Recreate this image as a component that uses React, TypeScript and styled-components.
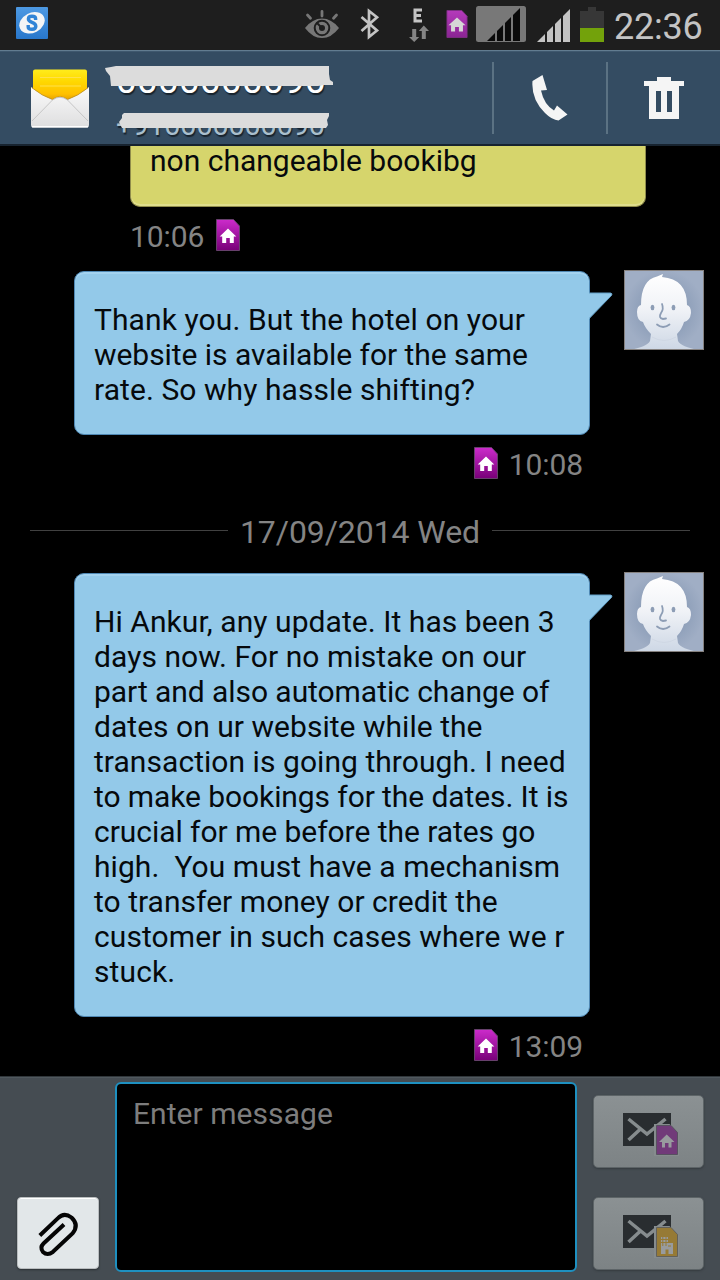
import React from "react";
import styled, { createGlobalStyle } from "styled-components";

const GlobalStyle = createGlobalStyle`
  * { box-sizing: border-box; }
  body { margin: 0; background: #000; font-family: Roboto, "Liberation Sans", sans-serif; }
  svg { display: block; flex: none; }
`;

const Screen = styled.div`
  width: 720px;
  height: 1280px;
  display: flex;
  flex-direction: column;
  overflow: hidden;
  background: #000;
`;

const StatusBar = styled.div`
  height: 50px;
  flex: none;
  display: flex;
  align-items: flex-start;
  padding: 0 16px;
  background: #1e1e1e;
`;

const StatusItem = styled.div<{ $top: number; $left?: number }>`
  margin-top: ${(p) => p.$top}px;
  margin-left: ${(p) => p.$left ?? 0}px;
`;

const Spacer = styled.div`
  flex: 1;
`;

const Clock = styled.div`
  width: 90px;
  margin: 6px 0 0 10px;
  font-size: 36px;
  line-height: 42px;
  letter-spacing: -0.2px;
  color: #c4c4c4;
  white-space: nowrap;
`;

const Header = styled.header`
  height: 96px;
  flex: none;
  display: flex;
  background: #344c62;
  border-top: 1px solid #627c90;
  border-bottom: 2px solid #17232f;
  box-shadow: inset 0 1px 0 #3f586e;
`;

const ContactIcon = styled.div`
  margin: 17px 0 0 30px;
`;

const Contact = styled.div`
  flex: 1;
  display: flex;
  flex-direction: column;
  margin-left: 15px;
`;

const Redacted = styled.div<{ $height: number; $size: number; $color: string; $pad: number; $top: number; $spacing: number }>`
  position: relative;
  height: ${(p) => p.$height}px;
  padding: ${(p) => p.$top}px 0 0 ${(p) => p.$pad}px;
  font-size: ${(p) => p.$size}px;
  line-height: ${(p) => p.$size}px;
  letter-spacing: ${(p) => p.$spacing}px;
  color: ${(p) => p.$color};
  white-space: nowrap;
  text-shadow: 1px 2px 1px rgba(0, 0, 0, 0.55);
`;

const Scribble = styled.svg`
  position: absolute;
  left: 0;
  top: 0;
`;

const HeaderAction = styled.button`
  width: 114px;
  padding: 0 0 0 2px;
  border: 0;
  background: none;
  display: flex;
  justify-content: center;
  position: relative;
  &::before {
    content: "";
    position: absolute;
    left: 0;
    top: 11px;
    width: 2px;
    height: 72px;
    background: #5b7283;
  }
`;

const Conversation = styled.main`
  flex: 1;
  min-height: 0;
  overflow: hidden;
  display: flex;
  flex-direction: column;
`;

const MessageRow = styled.div`
  display: flex;
  flex: none;
  align-items: flex-start;
  justify-content: space-between;
  padding: 0 16px 0 74px;
`;

const Bubble = styled.div<{ $kind: "received" | "sent" }>`
  position: relative;
  width: 516px;
  margin-top: 1px;
  padding: 30px 0 27px 19px;
  border: 1px solid #4f88b4;
  border-radius: 10px;
  background: #93c9e9;
  box-shadow: inset 0 2px 0 #a3d2ef;
  font-size: 30px;
  line-height: 35px;
  color: #06090c;
  white-space: pre;
  ${(p) =>
    p.$kind === "received" &&
    `
    flex: none;
    height: 61px;
    margin: 0 0 0 130px;
    padding: 0 0 0 19px;
    border-color: #908d4c;
    border-top: 0;
    border-radius: 0 0 10px 10px;
    background: #d6d56c;
    box-shadow: inset 0 -2px 0 #dfde8c;
    line-height: 29px;
  `}
`;

const Line = styled.div<{ $spacing?: number }>`
  letter-spacing: ${(p) => p.$spacing ?? 0}px;
`;

const Tail = styled.svg`
  position: absolute;
  left: 513px;
  top: 19px;
`;

const Meta = styled.div<{ $align: "left" | "right" }>`
  display: flex;
  flex: none;
  height: 35px;
  margin-top: 12px;
  gap: ${(p) => (p.$align === "left" ? 12 : 11)}px;
  font-size: 30px;
  line-height: 35px;
  color: #848484;
  letter-spacing: -0.1px;
  padding: ${(p) => (p.$align === "left" ? "0 0 0 130px" : "0 137px 0 0")};
  justify-content: ${(p) => (p.$align === "left" ? "flex-start" : "flex-end")};
`;

const Gap = styled.div<{ $size: number }>`
  height: ${(p) => p.$size}px;
  flex: none;
`;

const DateDivider = styled.div`
  display: flex;
  flex: none;
  height: 36px;
  padding: 0 30px;
  gap: 12px;
  font-size: 32px;
  line-height: 36px;
  letter-spacing: -0.07px;
  color: #848484;
  white-space: nowrap;
`;

const Rule = styled.div`
  flex: 1;
  height: 1px;
  margin-top: 16px;
  background: #414141;
`;

const Composer = styled.footer`
  height: 204px;
  flex: none;
  display: flex;
  align-items: flex-start;
  padding: 5px 0 0 17px;
  border-top: 1px solid #30363a;
  background: #454c52;
  box-shadow: inset 0 1px 0 #50585e;
`;

const AttachButton = styled.button`
  width: 82px;
  height: 72px;
  flex: none;
  margin-top: 115px;
  padding: 0;
  border: 1px solid #b9bdbf;
  border-radius: 4px;
  background: #e2e7e9;
  box-shadow: inset 0 1px 0 #fff, 0 1px 2px #2a3034;
  display: flex;
`;

const MessageInput = styled.div`
  width: 462px;
  height: 190px;
  flex: none;
  margin-left: 16px;
  padding: 12px 16px;
  border: 2px solid #1e90c0;
  border-radius: 6px;
  background: #000;
  color: #7d7d7d;
  font-size: 30px;
  line-height: 35px;
  letter-spacing: 0.05px;
`;

const SendColumn = styled.div`
  display: flex;
  flex-direction: column;
  gap: 29px;
  margin: 13px 0 0 16px;
`;

const SendButton = styled.button`
  width: 111px;
  height: 73px;
  padding: 0;
  border: 1px solid #5d6467;
  border-radius: 5px;
  background: linear-gradient(#8b9193, #7d8385);
  box-shadow: 0 1px 2px #353b3f;
  display: flex;
`;

const SimCard = ({ w = 24, h = 32, dim = false }: { w?: number; h?: number; dim?: boolean }) => (
  <svg width={w} height={h} viewBox="0 0 24 32">
    <defs>
      <linearGradient id={dim ? "simDim" : "sim"} x1="0" y1="0" x2="0" y2="1">
        <stop offset="0" stopColor={dim ? "#b53abb" : "#cc2bcb"} />
        <stop offset="1" stopColor={dim ? "#8a2493" : "#780078"} />
      </linearGradient>
    </defs>
    <path d="M.5 .5H17.5L23.5 7V31.5H.5Z" fill={`url(#${dim ? "simDim" : "sim"})`} stroke={dim ? "#803087" : "#66406b"} />
    {dim ? (
      <path d="M12 8.500L2.300 17.500H5.200V24.500H9.800V19.500H14.200V24.500H18.800V17.500H21.700Z" fill="#d6d6d6" />
    ) : (
      <path d="M12 9.500L3.700 17.500H6.200V24H10.200V19H13.800V24H17.800V17.500H20.300Z" fill="#fff" />
    )}
  </svg>
);

const SIcon = () => (
  <svg width="32" height="32" viewBox="0 0 32 32">
    <defs>
      <linearGradient id="sApp" x1="0" y1="0" x2="0" y2="1">
        <stop offset="0" stopColor="#4d99e3" />
        <stop offset="1" stopColor="#2877cb" />
      </linearGradient>
    </defs>
    <rect width="32" height="32" rx="1" fill="url(#sApp)" />
    <ellipse cx="16" cy="15.8" rx="13.3" ry="10" transform="rotate(-27 16 15.8)" fill="#f4f5f6" />
    <path d="M19.600 13V11.500Q19.600 9.300 16 9.300Q12.400 9.300 12.400 12Q12.400 14 16 15.300Q19.800 16.800 19.800 19.200Q19.800 22.200 16 22.200Q12.200 22.200 12.200 20V18" fill="none" stroke="#3184d6" strokeWidth="3.400" />
  </svg>
);

const EyeIcon = () => (
  <svg width="34" height="30" viewBox="0 0 34 30">
    <path d="M0 18Q7.5 8.5 17 8.5T34 18Q26.500 28 17 28T0 18Z" fill="#777" />
    <circle cx="17" cy="18" r="7.3" fill="none" stroke="#1e1e1e" strokeWidth="2" />
    <circle cx="17" cy="18" r="3" fill="#1e1e1e" />
    <path d="M17 18L11.500 12.500" stroke="#1e1e1e" strokeWidth="2" />
    <path d="M17 1.500V6M2.500 5L5.500 8.300M31.500 5L28.500 8.300" stroke="#777" strokeWidth="2.800" strokeLinecap="round" />
  </svg>
);

const BluetoothIcon = () => (
  <svg width="20" height="32" viewBox="0 0 20 32">
    <path d="M1.500 9L17 22.500L9 29V3L17 9.300L1.500 23" fill="none" stroke="#c4c4c4" strokeWidth="2.700" />
  </svg>
);

const DataIcon = () => (
  <svg width="20" height="34" viewBox="0 0 20 34">
    <path d="M13 2H6V13H13M6 7.500H12" fill="none" stroke="#c4c4c4" strokeWidth="3" />
    <path d="M3.200 21H7.200V29H10.200L5.200 34L0 29H3.200ZM12.800 31H16.800V23H20L14.800 17.500L9.800 23H12.800Z" fill="#858585" />
  </svg>
);

const SignalActive = () => (
  <svg width="50" height="36" viewBox="0 0 50 36">
    <rect width="50" height="36" rx="2.500" fill="#787878" />
    <path d="M11 35L44 2V35Z" fill="#0a0a0a" />
    <path d="M20 2V35M28 2V35M36 2V35" stroke="#787878" strokeWidth="2" />
  </svg>
);

const Signal = () => (
  <svg width="33" height="33" viewBox="0 0 33 33">
    <path d="M0 33L33 0V33Z" fill="#c4c4c4" />
    <path d="M9 0V33M17 0V33M25 0V33" stroke="#1e1e1e" strokeWidth="2" />
  </svg>
);

const Battery = () => (
  <svg width="24" height="35" viewBox="0 0 24 35">
    <path d="M8 0H16V4H24V35H0V4H8Z" fill="#373737" />
    <rect y="21" width="24" height="14" fill="#73a20b" />
  </svg>
);

const Envelope = () => (
  <svg width="60" height="61" viewBox="0 0 60 61">
    <defs>
      <linearGradient id="paper" x1="0" y1="0" x2="0" y2="1">
        <stop offset="0" stopColor="#ffec1c" />
        <stop offset=".35" stopColor="#ffd800" />
        <stop offset=".7" stopColor="#ffc000" />
        <stop offset="1" stopColor="#d08a00" />
      </linearGradient>
      <linearGradient id="flap" x1="0" y1="0" x2="0" y2="1">
        <stop offset="0" stopColor="#fafafa" />
        <stop offset="1" stopColor="#dededf" />
      </linearGradient>
    </defs>
    <rect x="3" y="1.500" width="54" height="35" rx="2" fill="url(#paper)" />
    <path d="M10 9.500H51M10 18H51" stroke="#ffe14a" strokeWidth="1" />
    <path d="M1 19Q12 28 22.500 31.500Q30 26 37.500 31.500Q48 28 59 19V57Q59 59.500 57 59.500H3Q1 59.500 1 57Z" fill="url(#flap)" />
    <path d="M2 19.800Q12 28 22.500 31.500Q30 26 37.500 31.500Q48 28 58 19.800" fill="none" stroke="#b98a20" strokeWidth=".8" />
    <path d="M2 53L22.500 32Q30 26.500 37.500 32L58 53" fill="none" stroke="#c6c6c6" />
    <path d="M2 58.800H58" stroke="#fff" strokeWidth="1.500" />
  </svg>
);

const PhoneIcon = () => (
  <svg width="36" height="47" viewBox="0 0 36 47">
    <path d="M0.500 6L10.500 0L15 15L9 15.500Q12 29.500 22 35.500L25 30.500L35.500 39.500L26.500 45.500Q20 45 13 38Q-1 24 0.500 6Z" fill="#f5f5f5" />
  </svg>
);

const TrashIcon = () => (
  <svg width="40" height="43" viewBox="0 0 40 43">
    <path fillRule="evenodd" d="M13 0H27V4H40V9H35V42H5V9H0V4H13ZM12 14V35H17V14ZM23 14V35H28V14Z" fill="#f5f5f5" />
  </svg>
);

const AvatarPicture = () => (
  <svg width="80" height="80" viewBox="0 0 80 80">
    <defs>
      <linearGradient id="face" x1="0" y1="0" x2="0" y2="1">
        <stop offset="0" stopColor="#fff" />
        <stop offset=".45" stopColor="#f1f3f7" />
        <stop offset="1" stopColor="#cdd7e5" />
      </linearGradient>
      <radialGradient id="backdrop">
        <stop offset=".55" stopColor="#8e9fb9" />
        <stop offset="1" stopColor="#a0aec5" />
      </radialGradient>
    </defs>
    <rect width="80" height="80" fill="url(#backdrop)" />
    <path d="M5 80Q23 77 26 71L27 64Q21 58 19 52Q13 51 13 42Q13 36 17 35Q17 10 33 6.500L39 4L38 7Q63 9 63 35Q67 36 67 43Q66 51 60 52Q58 59 53 64L54 71Q57 77 75 80Z" fill="url(#face)" />
    <path d="M28 67Q40 74 52 67" fill="none" stroke="#c9d2e0" opacity=".6" />
    <ellipse cx="28.500" cy="37.500" rx="1.900" ry="2.700" fill="#8d9db5" />
    <ellipse cx="49.500" cy="37.500" rx="1.900" ry="2.700" fill="#8d9db5" />
    <path d="M38 34Q40 39 37 43Q34 48 39 49L42 48.500M33 54.500Q39 59.500 45.500 54.500" fill="none" stroke="#8d9db5" strokeWidth="1.800" strokeLinecap="round" />
    <rect x=".5" y=".5" width="79" height="79" fill="none" stroke="#85817f" />
  </svg>
);

const ClipIcon = () => (
  <svg width="80" height="70" viewBox="0 0 80 70">
    <path d="M21.800 37.500L40 20.200Q46 14 53.500 19.500Q61.500 27 54.500 35.500L35 53.800Q29.500 58 25 54Q21.500 49.500 25.500 45.500L46 26.500" fill="none" stroke="#050505" strokeWidth="4" />
  </svg>
);

const SendIcon = ({ kind }: { kind: "home" | "office" }) => (
  <svg width="109" height="71" viewBox="0 0 109 71">
    <rect x="29" y="17" width="48" height="33" fill="#292d30" />
    <path d="M34.500 23L53 38L71.500 23M34.500 44L47 32.500" fill="none" stroke="#868c8e" strokeWidth="3.500" />
    <path d="M60 28H75.500L85 37.500V60H60Z" fill="#868c8e" />
    <path
      d="M62.500 29.500H77L83.500 36.500V58.500H62.500Z"
      fill={kind === "home" ? "#713a79" : "#967a35"}
      stroke={kind === "home" ? "#585160" : "#62605a"}
    />
    {kind === "home" ? (
      <path d="M72.700 38.500L65 46H68V51.500H71V47H74.500V51.500H77.500V46H80.500Z" fill="#989b9e" />
    ) : (
      <>
        <path fillRule="evenodd" d="M67 39H74V45H79V56H74.500V51.500H71.500V56H67Z" fill="#989b9e" />
        <path d="M68.800 39V48M72 39V48M67 41.500H74M67 44.500H74M74 48H77" stroke="#967a35" strokeWidth="1" />
      </>
    )}
  </svg>
);

const BubbleTail = () => (
  <Tail width="26" height="30" viewBox="0 0 26 30">
    <path d="M0 2H22.500Q25 2.500 23.500 4.500L1 28H0Z" fill="#93c9e9" />
    <path d="M1 2H22.500Q25 2.500 23.500 4.500L1.500 27" fill="none" stroke="#639fc6" />
  </Tail>
);

type TextLine = [text: string, spacing: number];

const FIRST: TextLine[] = [
  ["Thank you. But the hotel on your", 0.09],
  ["website is available for the same", -0.05],
  ["rate. So why hassle shifting?", 0.07],
];
const SECOND: TextLine[] = [
  ["Hi Ankur, any update. It has been 3", 0.06],
  ["days now. For no mistake on our", 0.06],
  ["part and also automatic change of", -0.06],
  ["dates on ur website while the", 0.03],
  ["transaction is going through. I need", 0.05],
  ["to make bookings for the dates. It is", -0.09],
  ["crucial for me before the rates go", -0.05],
  ["high.  You must have a mechanism", 0.06],
  ["to transfer money or credit the", 0.03],
  ["customer in such cases where we r", 0.08],
  ["stuck.", 0.1],
];

const OutgoingMessage = ({ lines, time }: { lines: TextLine[]; time: string }) => (
  <>
    <MessageRow>
      <Bubble $kind="sent">
        {lines.map(([text, spacing]) => (
          <Line key={text} $spacing={spacing}>{text}</Line>
        ))}
        <BubbleTail />
      </Bubble>
      <AvatarPicture />
    </MessageRow>
    <Meta $align="right">
      <SimCard />
      <span>{time}</span>
    </Meta>
  </>
);

export default function App() {
  return (
    <Screen>
      <GlobalStyle />
      <StatusBar>
        <StatusItem $top={7}><SIcon /></StatusItem>
        <Spacer />
        <StatusItem $top={10}><EyeIcon /></StatusItem>
        <StatusItem $top={8} $left={21}><BluetoothIcon /></StatusItem>
        <StatusItem $top={8} $left={29}><DataIcon /></StatusItem>
        <StatusItem $top={10} $left={17}><SimCard w={22} h={28} dim /></StatusItem>
        <StatusItem $top={6} $left={8}><SignalActive /></StatusItem>
        <StatusItem $top={9} $left={11}><Signal /></StatusItem>
        <StatusItem $top={7} $left={10}><Battery /></StatusItem>
        <Clock>22:36</Clock>
      </StatusBar>
      <Header>
        <ContactIcon><Envelope /></ContactIcon>
        <Contact>
          <Redacted $height={57} $size={37} $color="#fff" $pad={11} $top={11} $spacing={0.2}>
            0000000090
            <Scribble width="230" height="37">
              <path d="M0 17L6 16L11 15H224V23L225 29L228 31V34H219L213 35H6L5 25L1 20Z" fill="#dcdcdc" />
            </Scribble>
          </Redacted>
          <Redacted $height={36} $size={29} $color="#a9bfcd" $pad={11} $top={3} $spacing={-0.25}>
            +910000000090
            <Scribble width="230" height="24">
              <path d="M19 5H224V8L222 12L223 17L221 20H17L14 14L17 10V7Z" fill="#dcdcdc" />
            </Scribble>
          </Redacted>
        </Contact>
        <HeaderAction><StatusItem $top={24}><PhoneIcon /></StatusItem></HeaderAction>
        <HeaderAction><StatusItem $top={26}><TrashIcon /></StatusItem></HeaderAction>
      </Header>
      <Conversation>
        <Bubble $kind="received">
          <Line>non changeable bookibg</Line>
        </Bubble>
        <Meta $align="left">
          <span>10:06</span>
          <SimCard />
        </Meta>
        <Gap $size={16} />
        <OutgoingMessage lines={FIRST} time="10:08" />
        <Gap $size={32} />
        <DateDivider>
          <Rule />
          <span>17/09/2014 Wed</span>
          <Rule />
        </DateDivider>
        <Gap $size={22} />
        <OutgoingMessage lines={SECOND} time="13:09" />
      </Conversation>
      <Composer>
        <AttachButton><ClipIcon /></AttachButton>
        <MessageInput>Enter message</MessageInput>
        <SendColumn>
          <SendButton><SendIcon kind="home" /></SendButton>
          <SendButton><SendIcon kind="office" /></SendButton>
        </SendColumn>
      </Composer>
    </Screen>
  );
}
